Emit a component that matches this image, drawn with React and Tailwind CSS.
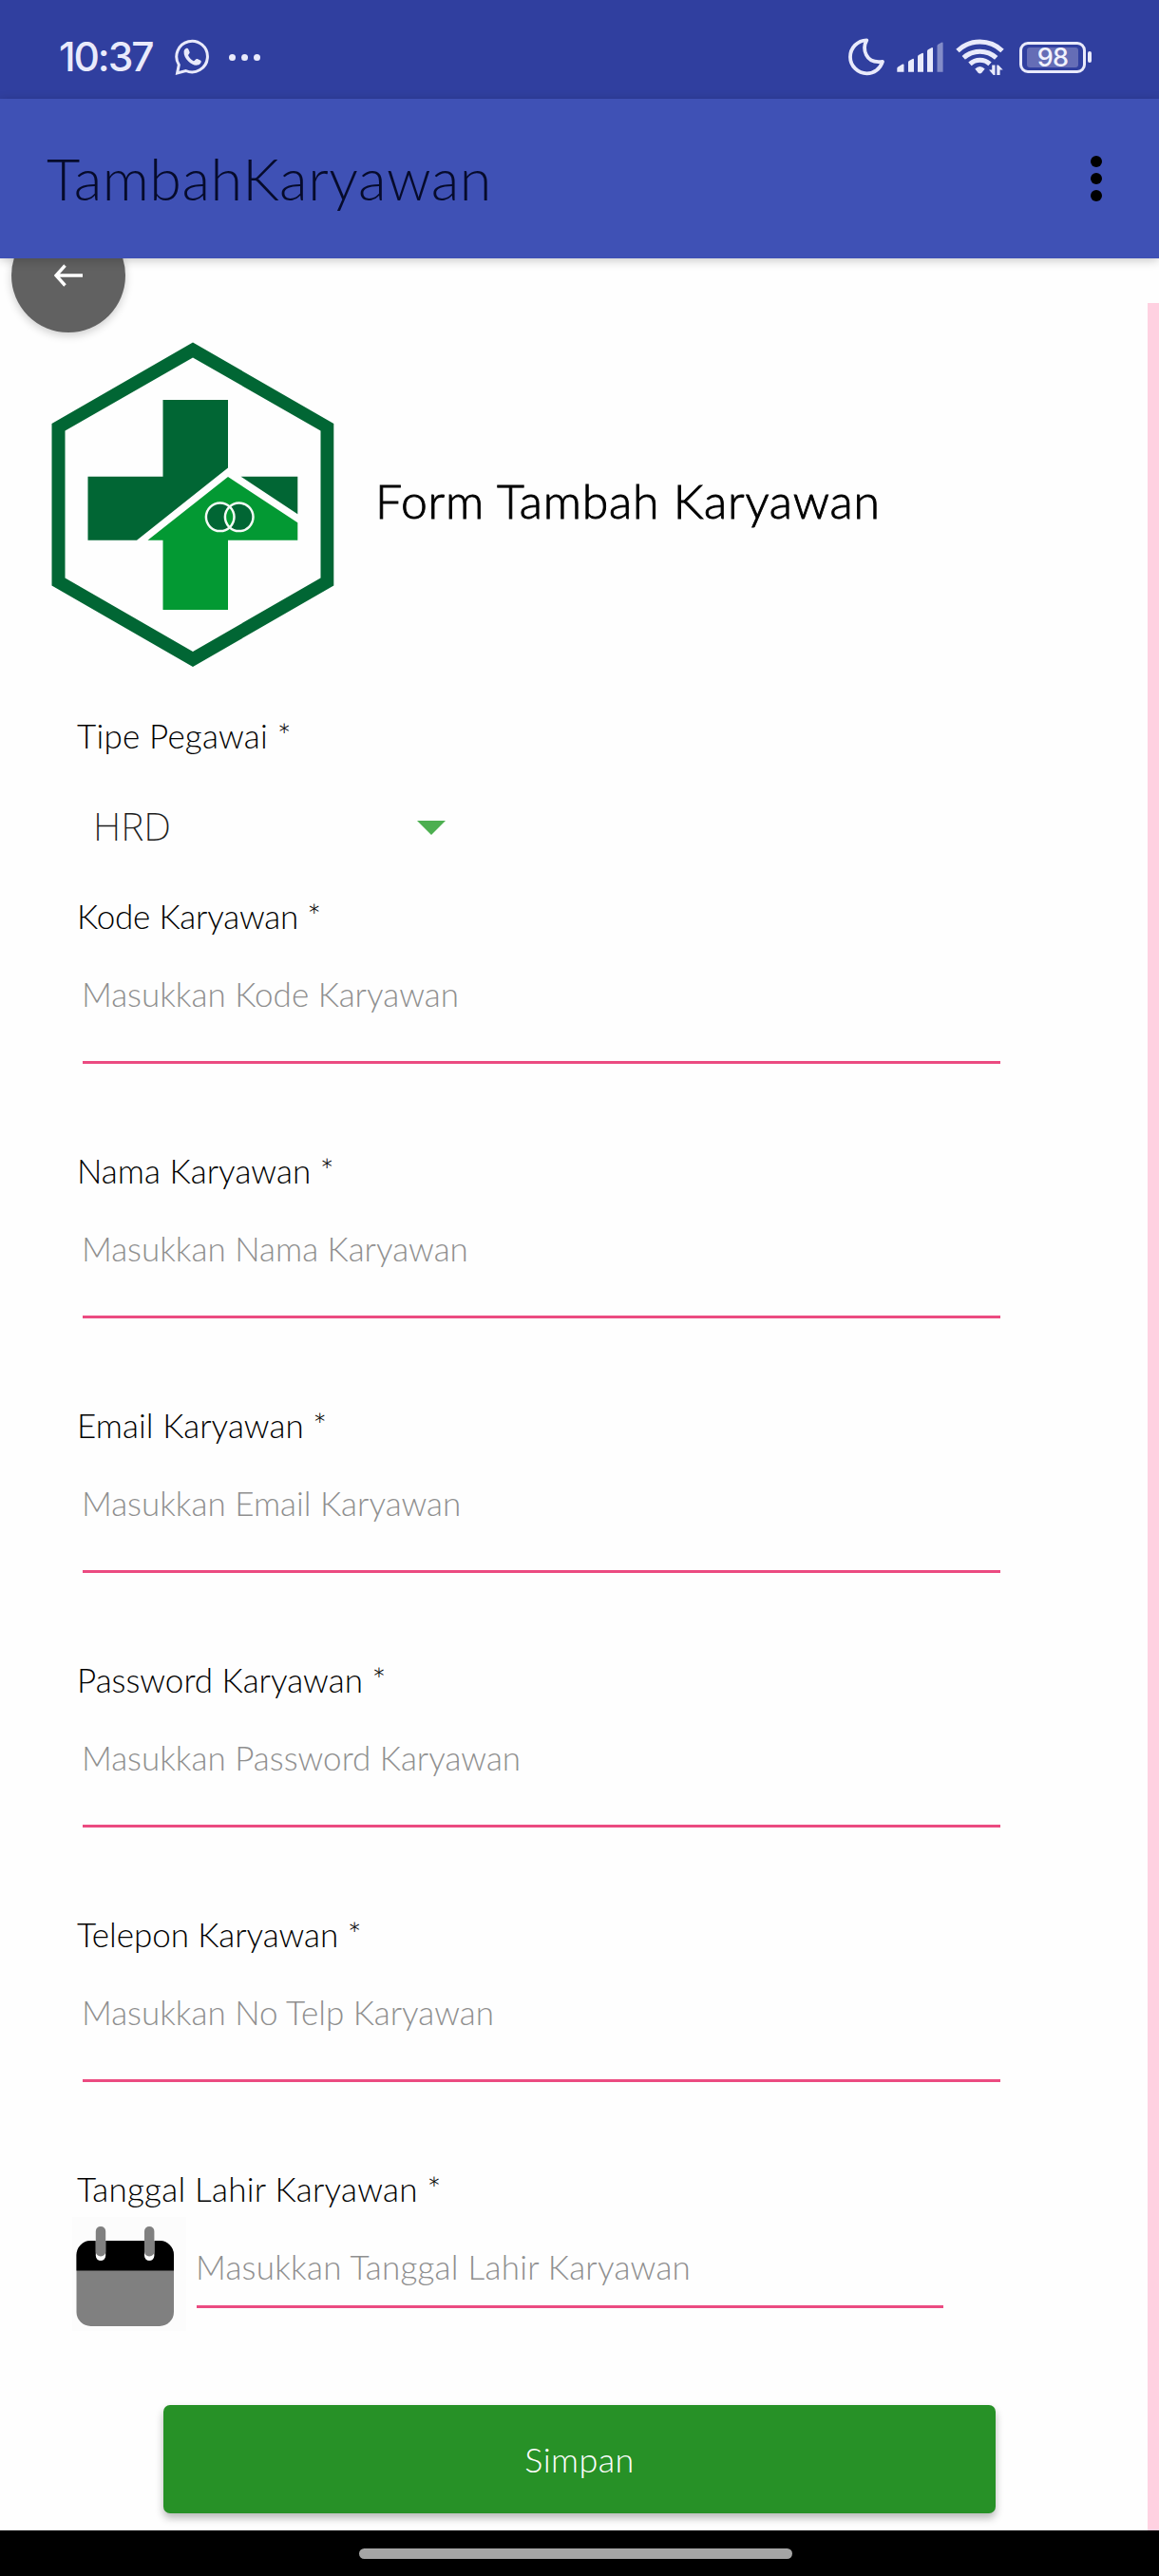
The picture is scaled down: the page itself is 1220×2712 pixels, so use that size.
import React from "react";

const FIELDS = [
  ["Kode Karyawan *", "Masukkan Kode Karyawan", "tracking-[-0.200px]"],
  ["Nama Karyawan *", "Masukkan Nama Karyawan", "tracking-[0.050px]"],
  ["Email Karyawan *", "Masukkan Email Karyawan", "tracking-[0.050px]"],
  ["Password Karyawan *", "Masukkan Password Karyawan", "tracking-[0px]"],
  ["Telepon Karyawan *", "Masukkan No Telp Karyawan", "tracking-[-0.050px]"],
];

function WhatsAppIcon() {
  return (
    <svg className="h-[40px] w-[38px]" viewBox="0 0 38 40" fill="none">
      <path
        d="M2.600 36.900 L4.300 28.200 A16.300 16.300 0 1 1 11.600 34.500 Z"
        stroke="#e9eafb"
        strokeWidth="3"
        strokeLinejoin="miter"
      />
      <path
        d="M10.4 12.2c-.4 3.6 1.700 7.400 4.600 10.300 2.900 2.900 6.300 4.500 9.500 4.100 2-.3 3.600-1.700 4-3.300.2-.9-.1-1.500-.8-1.900l-3.100-1.300c-.8-.3-1.400-.1-2 .6l-1 1.100c-.4.4-.9.5-1.400.2-2.200-1.200-4-3.100-5.100-5.300-.2-.5-.2-.9.1-1.300l.9-1.100c.4-.6.5-1.100.2-1.800l-1.200-2.800c-.4-.9-1.100-1.100-1.900-.9-1.500.4-2.600 1.700-2.800 3.400z"
        transform="translate(-0.800 2)"
        fill="#e9eafb"
      />
    </svg>
  );
}

function MoonIcon() {
  return (
    <svg className="h-[40px] w-[38px]" viewBox="0 0 38 40" fill="none">
      <path
        d="M19.300 2.300 C14.500 11 17.500 27.500 36 24.800 C33.500 32.500 27 37.300 19.500 37.300 C10 37.300 2 29.500 2 20 C2 10.500 9.500 2.500 19.300 2.300 Z"
        stroke="#e9eafb"
        strokeWidth="3.800"
        strokeLinejoin="round"
      />
    </svg>
  );
}

function SignalIcon() {
  return (
    <svg className="h-[32px] w-[49px]" viewBox="0 0 49 32" fill="#e9eafb">
      <path d="M0.300 31.800 V28 Q0.300 27 1.200 26.400 L6 23.600 Q7.500 23 7.500 24.500 V31.800 Z" />
      <path d="M12 31.800 V21.500 Q12 20.500 12.900 20 L16.500 17.900 Q18 17.300 18 18.800 V31.800 Z" />
      <path d="M22 31.800 V15.500 Q22 14.500 22.900 14 L26.500 12 Q28 11.300 28 12.800 V31.800 Z" />
      <path d="M32 31.800 V9.800 Q32 8.800 32.900 8.300 L36.500 6.300 Q38 5.600 38 7.100 V31.800 Z" />
      <path
        d="M42.500 31.800 V4.200 Q42.500 3.200 43.400 2.700 L47 0.700 Q48.600 0 48.600 1.500 V31.800 Z"
        opacity="0.450"
      />
    </svg>
  );
}

function WifiIcon() {
  return (
    <svg className="h-[40px] w-[52px]" viewBox="0 0 52 40" fill="none">
      <g stroke="#e9eafb" strokeWidth="5">
        <path d="M2 13.500 A34 34 0 0 1 49 13.500" />
        <path d="M8.300 20.800 A25.500 25.500 0 0 1 42.700 20.800" />
        <path d="M15 27.300 A15.500 15.500 0 0 1 36 27.300" />
      </g>
      <path d="M20.300 32.600 Q25.500 27.500 30.700 32.600 L27.300 36.700 Q25.500 38.200 23.700 36.700 Z" fill="#e9eafb" />
      <g fill="#e9eafb">
        <path d="M38.200 28.500 H41.500 V39 H39.700 L35 33.600 H38.200 Z" />
        <path d="M43.300 28.500 H45 L49.700 33.500 H46.600 V39 H43.300 Z" />
      </g>
    </svg>
  );
}

function Battery() {
  return (
    <div className="flex items-center gap-[2px]">
      <div className="flex h-[33px] w-[70px] items-center justify-center rounded-[9px] border-[3px] border-[#e9eafb] p-[4px]">
        <div className="flex h-[21px] w-[54px] items-center justify-center rounded-[3px] bg-[#656db6]">
          <span className="text-[27px] leading-none font-medium tracking-[-0.800px] text-[#f1f2fd]">98</span>
        </div>
      </div>
      <div className="h-[12px] w-[4px] rounded-[2px] bg-[#e9eafb]" />
    </div>
  );
}

function StatusBar() {
  return (
    <div className="flex h-[104px] items-center bg-[#303f9f] pt-4 pr-[71px] pl-[62px] font-['Inter',sans-serif]">
      <span className="w-[122px] text-[42.500px] leading-none font-medium tracking-[-2.100px] text-[#e9eafb]">10:37</span>
      <WhatsAppIcon />
      <div className="ml-[19px] flex gap-[6px]">
        <i className="size-[7px] rounded-full bg-[#e9eafb]" />
        <i className="size-[7px] rounded-full bg-[#e9eafb]" />
        <i className="size-[7px] rounded-full bg-[#e9eafb]" />
      </div>
      <div className="ml-auto flex items-center">
        <MoonIcon />
        <div className="ml-[13px]">
          <SignalIcon />
        </div>
        <div className="ml-[13px]">
          <WifiIcon />
        </div>
        <div className="ml-[15px]">
          <Battery />
        </div>
      </div>
    </div>
  );
}

function AppBar() {
  return (
    <header className="relative z-10 flex h-[168px] items-center justify-between bg-[#3f51b5] pr-[60px] pl-[49px] shadow-[0_2px_10px_rgba(0,0,0,0.220)]">
      <h1 className="text-[61px] leading-[72px] font-light tracking-[0.550px] text-[#060b2b]">TambahKaryawan</h1>
      <div className="flex flex-col gap-[6px]">
        <i className="size-[12px] rounded-full bg-black" />
        <i className="size-[12px] rounded-full bg-black" />
        <i className="size-[12px] rounded-full bg-black" />
      </div>
    </header>
  );
}

function Logo() {
  return (
    <svg className="h-[342px] w-[298px]" viewBox="54 360 298 342">
      <path
        fill="#016634"
        fillRule="evenodd"
        d="M203 360.500 351.300 446V616.500L203 702 54.500 616.500V446Z M203 376.500 68.500 453.500V608.500L203 686 337.500 608.500V453.500Z"
      />
      <path
        fill="#016634"
        d="M171.500 421H240V492.500L144 568.700H92.500V501.700H171.500Z M253.500 501.700H313.300V541.300Z"
      />
      <path fill="#039933" d="M240 502 313.300 550.300V568.700H240V642H171.500V568.700H155.500Z" />
      <circle cx="231.700" cy="544.300" r="14.800" fill="#016634" />
      <circle cx="251.700" cy="544.300" r="14.800" fill="#016634" />
      <path d="M241.700 533.400A14.800 14.800 0 0 1 241.700 555.200A14.800 14.800 0 0 1 241.700 533.400Z" fill="#039933" />
      <g fill="none" stroke="#f4fbf6" strokeWidth="2.500">
        <circle cx="231.700" cy="544.300" r="14.800" />
        <circle cx="251.700" cy="544.300" r="14.800" />
      </g>
    </svg>
  );
}

function CalendarIcon() {
  return (
    <svg className="h-[120px] w-[120px] bg-[#fcfcfc]" viewBox="0 0 120 120">
      <rect x="4.500" y="25" width="102.500" height="90" rx="15" fill="#808080" />
      <path d="M4.500 56.500V40A15 15 0 0 1 19.500 25H92A15 15 0 0 1 107 40V56.500Z" fill="#000" />
      <rect x="24.800" y="20" width="10.400" height="26" rx="5.200" fill="#fff" />
      <rect x="76" y="20" width="10.400" height="26" rx="5.200" fill="#fff" />
      <rect x="24.800" y="10" width="10.400" height="31.500" rx="5" fill="#808080" />
      <rect x="76" y="10" width="10.400" height="31.500" rx="5" fill="#808080" />
    </svg>
  );
}

function Label({ children }) {
  return <div className="h-[42px] text-[35px] leading-[42px] text-black">{children}</div>;
}

function Field({ label, hint, tracking }) {
  return (
    <div className="h-[268px]">
      <div className={tracking}>
        <Label>{label}</Label>
      </div>
      <div className="ml-[6px] h-[135px] w-[966px] border-b-[3px] border-[#eb4b81] pt-[40px] text-[35px] leading-[42px] text-[#8f8f8f]">
        <span className="-ml-[1px]">{hint}</span>
      </div>
    </div>
  );
}

export default function App() {
  return (
    <div className="flex h-[2712px] w-[1220px] flex-col overflow-hidden bg-[#fefefe] font-['Lato',sans-serif] font-light">
      <StatusBar />
      <AppBar />
      <main className="relative flex h-[2392px] overflow-hidden">
        <button className="absolute -top-[42px] left-[12px] flex size-[120px] items-center justify-center rounded-full bg-[#616161] shadow-[0_3px_10px_rgba(0,0,0,0.200)]">
          <svg className="h-[24px] w-[30px]" viewBox="0 0 30 24" fill="none" stroke="#fff" strokeWidth="3.400">
            <path d="M30 12H2.500M11.500 1.500 2 12 11.500 22.500" />
          </svg>
        </button>

        <div className="flex w-[1208px] flex-col">
          <div className="flex items-center gap-[43px] pt-[88px] pl-[54px]">
            <Logo />
            <h2 className="-mt-[8px] text-[50px] leading-[60px] tracking-[0.780px] text-black [-webkit-text-stroke:0.900px_black]">
              Form Tambah Karyawan
            </h2>
          </div>

          <div className="mt-[51px] pl-[81px]">
            <div className="tracking-[0.200px]">
              <Label>Tipe Pegawai *</Label>
            </div>
            <div className="flex h-[148px] w-[388px] items-center justify-between pl-[17px] text-[#1c1c1c]">
              <span className="font-['Noto_Sans',sans-serif] text-[41px] leading-none font-extralight">HRD</span>
              <svg className="mt-[5px] h-[15px] w-[30px]" viewBox="0 0 30 15">
                <path d="M0 0H30L15 15Z" fill="#4caf50" />
              </svg>
            </div>
            {FIELDS.map(([label, hint, tracking]) => (
              <Field key={label} label={label} hint={hint} tracking={tracking} />
            ))}
            <div className="tracking-[0.250px]">
              <Label>Tanggal Lahir Karyawan *</Label>
              <div className="mt-[9px] -ml-[5px] flex gap-[11px]">
                <CalendarIcon />
                <div className="h-[96px] w-[786px] border-b-[3px] border-[#eb4b81] pt-[31px] text-[35px] leading-[42px] text-[#8f8f8f]">
                  <span className="-ml-[1px]">Masukkan Tanggal Lahir Karyawan</span>
                </div>
              </div>
            </div>
          </div>

          <button className="mt-[78px] ml-[172px] flex h-[114px] w-[876px] items-center justify-center rounded-[7px] bg-[#279127] text-[36px] leading-none tracking-[0.400px] text-white shadow-[0_5px_8px_rgba(0,0,0,0.280)]">
            Simpan
          </button>
        </div>

        <div className="mt-[47px] w-[12px] bg-[#ffd1e1]" />
      </main>
      <footer className="flex h-[48px] justify-center bg-black pr-2 pt-[19px]">
        <div className="h-[11px] w-[456px] rounded-full bg-[#a5a5a5]" />
      </footer>
    </div>
  );
}
